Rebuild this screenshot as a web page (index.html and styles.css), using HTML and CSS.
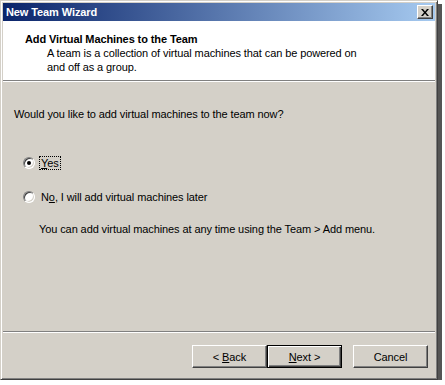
FILE: index.html
```html
<!DOCTYPE html>
<html lang="en">
<head>
  <meta charset="UTF-8" />
  <title>New Team Wizard</title>
  <link rel="stylesheet" href="styles.css">
</head>
<body>

  <!-- Wizard window -->
  <div class="window">
    <div class="titlebar">
      <span class="title">New Team Wizard</span>
      <button class="close-btn" aria-label="Close">
        <svg width="8" height="7" viewBox="0 0 8 7">
          <path d="M0 0h2l2 2.5L6 0h2L5 3.5 8 7H6L4 4.5 2 7H0l3-3.5z" fill="#000"/>
        </svg>
      </button>
    </div>

    <div class="header">
      <h1>Add Virtual Machines to the Team</h1>
      <p>A team is a collection of virtual machines that can be powered on<br>and off as a group.</p>
    </div>

    <div class="content">
      <p class="question">Would you like to add virtual machines to the team now?</p>

      <div class="options">
        <label class="option">
          <span class="radio checked"></span>
          <span class="label focused"><u>Y</u>es</span>
        </label>
        <label class="option">
          <span class="radio"></span>
          <span class="label">N<u>o</u>, I will add virtual machines later</span>
        </label>
        <p class="note">You can add virtual machines at any time using the Team &gt; Add menu.</p>
      </div>
    </div>

    <div class="footer">
      <div class="btn-group">
        <button class="btn">&lt; <u>B</u>ack</button>
        <button class="btn default"><u>N</u>ext &gt;</button>
      </div>
      <button class="btn">Cancel</button>
    </div>
  </div>

</body>
</html>
```

FILE: styles.css
```css
* {
  margin: 0;
  padding: 0;
  box-sizing: border-box;
  font-family: Tahoma, "Liberation Sans", Arial, sans-serif;
  font-size: 11px;
  letter-spacing: -0.1px;
}

body {
  background-color: #ffffff;
}

.window {
  width: 438px;
  height: 380px;
  background-color: #d4d0c8;
  border: 1px solid;
  border-color: #d4d0c8 #404040 #404040 #d4d0c8;
  box-shadow: inset 1px 1px 0 #ffffff, inset -1px -1px 0 #808080, 4px 4px 0 #555555;
  padding: 2px;
  display: flex;
  flex-direction: column;
}

.titlebar {
  height: 18px;
  display: flex;
  align-items: center;
  justify-content: space-between;
  padding: 0 2px 0 3px;
  background: linear-gradient(to right, #0a246a, #a6caf0);
}

.title {
  color: #ffffff;
  font-weight: bold;
}

.close-btn {
  width: 16px;
  height: 14px;
  background-color: #d4d0c8;
  border: 1px solid;
  border-color: #ffffff #404040 #404040 #ffffff;
  box-shadow: inset -1px -1px 0 #808080;
  display: flex;
  align-items: center;
  justify-content: center;
}

.header {
  height: 60px;
  background-color: #ffffff;
  border-bottom: 1px solid #808080;
  box-shadow: 0 1px 0 #ffffff;
  padding: 11px 0 0 22px;
}

.header h1 {
  font-weight: bold;
  line-height: 14px;
}

.header p {
  padding-left: 22px;
  line-height: 14px;
}

.content {
  flex: 1;
  padding: 27px 0 0 11px;
  border-bottom: 1px solid #808080;
  box-shadow: 0 1px 0 #ffffff;
}

.options {
  padding: 36px 0 0 9px;
  display: flex;
  flex-direction: column;
  gap: 20px;
}

.option {
  display: flex;
  align-items: center;
  gap: 4px;
  height: 14px;
}

.radio {
  width: 12px;
  height: 12px;
  border-radius: 50%;
  background-color: #ffffff;
  border: 1px solid;
  border-color: #808080 #ffffff #ffffff #808080;
  box-shadow: inset 1px 1px 0 #404040, inset -1px -1px 0 #d4d0c8;
  display: flex;
  align-items: center;
  justify-content: center;
}

.radio.checked::after {
  content: "";
  width: 4px;
  height: 4px;
  border-radius: 50%;
  background-color: #000000;
}

.label {
  padding: 0 1px;
  border: 1px solid transparent;
}

.label.focused {
  border: 1px dotted #000000;
}

.note {
  padding-left: 16px;
  margin-top: -1px;
}

.footer {
  height: 44px;
  display: flex;
  justify-content: flex-end;
  align-items: flex-start;
  gap: 11px;
  padding: 12px 7px 0 0;
  margin-top: 1px;
}

.btn-group {
  display: flex;
}

.btn {
  width: 75px;
  height: 23px;
  background-color: #d4d0c8;
  color: #000000;
  border: 1px solid;
  border-color: #ffffff #404040 #404040 #ffffff;
  box-shadow: inset -1px -1px 0 #808080;
}

.btn.default {
  border: 1px solid #000000;
  box-shadow: inset 1px 1px 0 #ffffff, inset -1px -1px 0 #404040, inset -2px -2px 0 #808080;
}
```
